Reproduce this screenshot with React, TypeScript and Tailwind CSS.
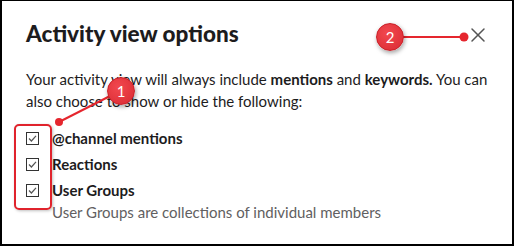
import { X } from "lucide-react";

const options = ["@channel mentions", "Reactions", "User Groups"];

function CheckBox() {
  return (
    <svg width="13" height="13" viewBox="0 0 13 13" className="mt-[1px] shrink-0">
      <rect x="0.5" y="0.5" width="12" height="12" fill="#fff" stroke="#333" strokeWidth="1" />
      <path d="M3 6.5 L5.4 9 L10 3.8" fill="none" stroke="#555" strokeWidth="1.2" />
    </svg>
  );
}

function Badge({ n }: { n: string }) {
  return (
    <div className="flex h-[28px] w-[28px] items-center justify-center rounded-full border border-[#c81e26] bg-[radial-gradient(circle_at_40%_35%,#f2484f,#d92a32)] text-[15px] text-white shadow-[1px_2px_4px_rgba(0,0,0,0.35)]">
      {n}
    </div>
  );
}

export default function App() {
  return (
    <div
      className="relative h-[246px] w-[514px] overflow-hidden border-2 border-t border-black bg-white text-[#1d1c1d]"
      style={{ fontFamily: "Lato, 'Open Sans', sans-serif" }}
    >
      <div className="pl-[24px] pr-[14px] pt-[19px]">
        <div className="flex items-center justify-between">
          <h1 className="text-[22.5px] font-black leading-[28px]">Activity view options</h1>
          <X size={24} strokeWidth={1.5} className="mr-[8px] mt-[2px] text-[#555]" />
        </div>
        <p className="mt-[20px] text-[15px] leading-[22px]">
          Your activity view will always include <b>mentions</b> and <b>keywords.</b> You can also choose to show or
          hide the following:
        </p>
        <div className="mt-[13px] flex flex-col">
          {options.map((o) => (
            <div key={o} className="flex h-[26px] items-center gap-[13px]">
              <CheckBox />
              <span className="text-[15px] font-bold leading-[26px]">{o}</span>
            </div>
          ))}
          <div className="-mt-[2px] pl-[26px] text-[15px] leading-[22px] text-[#616061]">
            User Groups are collections of individual members
          </div>
        </div>
      </div>

      {/* annotations */}
      <div className="absolute left-[12px] top-[123px] h-[86px] w-[38px] rounded-[5px] border-2 border-[#e0232c] shadow-[1px_1px_3px_rgba(0,0,0,0.25)]" />
      <svg className="absolute left-0 top-0" width="514" height="246">
        <line x1="57" y1="121" x2="112" y2="93" stroke="#e5262e" strokeWidth="2" />
        <circle cx="57" cy="121" r="4" fill="#e5262e" />
        <line x1="400" y1="36" x2="462" y2="36" stroke="#e5262e" strokeWidth="2" />
        <circle cx="462" cy="36" r="4.5" fill="#e5262e" />
      </svg>
      <div className="absolute left-[105px] top-[76px]">
        <Badge n="1" />
      </div>
      <div className="absolute left-[374px] top-[22px]">
        <Badge n="2" />
      </div>
    </div>
  );
}
